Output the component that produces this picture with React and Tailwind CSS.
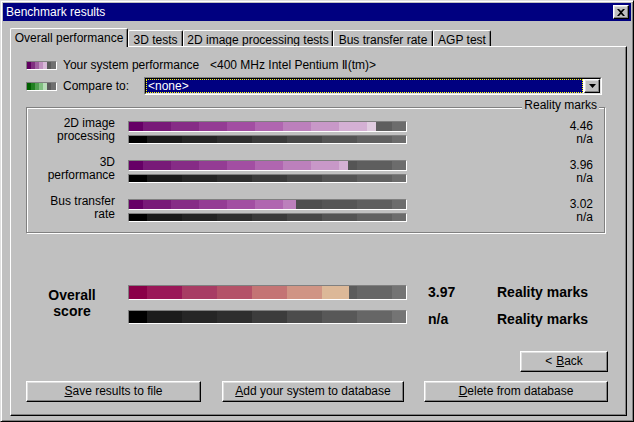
import React from 'react';

const FONT = "font-['Liberation_Sans','DejaVu_Sans','Noto_Sans_CJK_JP',sans-serif]";

const BAR_W = 277;
const PS = [0, 14, 42, 70, 98, 126, 154, 182, 210, 238, 266, 277];
const PURPLE = ['#660066', '#781a78', '#862c86', '#943c94', '#a24ea2', '#b066b0', '#bc80bc', '#c898c8', '#d4b0d4', '#e0cce0', '#f0e6f0'];
const GS = [0, 18, 53, 88, 123, 158, 193, 228, 263, 277];
const UNDER = ['#303030', '#383838', '#3c3c3c', '#424242', '#4a4a4a', '#4e4e4e', '#555555', '#5e5e5e', '#6c6c6c'];
const BLACK = ['#000000', '#1a1a1a', '#242424', '#2e2e2e', '#3a3a3a', '#474747', '#545454', '#606060', '#6c6c6c'];
const OVERALL = ['#8a0048', '#9a1858', '#a83c64', '#b45268', '#c47474', '#d09484', '#dcb898'];
const OVERALL_UNDER = ['#404040', '#484848', '#4c4c4c', '#525252', '#575757', '#5c5c5c', '#5c5c5c', '#666666', '#747474'];
const OVERALL_BLACK = ['#000000', '#1c1c1c', '#262626', '#2e2e2e', '#3c3c3c', '#4c4c4c', '#585858', '#666666', '#747474'];

function segs(stops, colors, from, to) {
  const out = [];
  for (let i = 0; i < colors.length; i++) {
    const a = Math.max(stops[i], from);
    const b = Math.min(stops[i + 1], to);
    if (b > a) out.push({ w: b - a, c: colors[i] });
  }
  return out;
}

function Bar({ fill, stops, colors, under, className }) {
  const parts = [...segs(stops, colors, 0, fill), ...segs(GS, under, fill, BAR_W)];
  return (
    <div className={`flex w-[279px] border border-t-[#808080] border-l-[#808080] border-b-white border-r-white ${className}`}>
      {parts.map((p, i) => (
        <div key={i} className="h-full" style={{ width: p.w, background: p.c }} />
      ))}
    </div>
  );
}

function Swatch({ colors }) {
  return (
    <div className="flex w-[31px] h-[9px] border border-t-[#808080] border-l-[#808080] border-b-white border-r-white">
      {colors.map((c, i) => (
        <div key={i} className="h-full w-[4px]" style={{ background: c }} />
      ))}
      <div className="h-full w-[4px] bg-[#5a5a5a]" />
      <div className="h-full flex-1 bg-[#707070]" />
    </div>
  );
}

const raised =
  'border border-t-white border-l-white border-b-black border-r-black shadow-[inset_-1px_-1px_0_#808080,inset_1px_1px_0_#dfdfdf]';

function Button({ className, children }) {
  return (
    <div className={`flex items-center justify-center h-[21px] text-[12px] leading-[13px] text-black bg-[#c0c0c0] ${raised} ${className}`}>
      {children}
    </div>
  );
}

function Metric({ l1, l2, fill, v }) {
  return (
    <div className="flex h-[39px]">
      <div className="w-[88px] text-right text-[12px] leading-[13px]">
        <div>{l1}</div>
        <div>{l2}</div>
      </div>
      <div className="ml-[13px] mt-[4px] flex flex-col">
        <Bar fill={fill} stops={PS} colors={PURPLE} under={UNDER} className="h-[11px]" />
        <Bar fill={BAR_W} stops={GS} colors={BLACK} under={UNDER} className="h-[9px] mt-[3px]" />
      </div>
      <div className="w-[186px] mt-[3px] text-right text-[12px] leading-[13px]">
        <div>{v}</div>
        <div>n/a</div>
      </div>
    </div>
  );
}

export default function App() {
  return (
    <div
      className={`${FONT} w-[634px] h-[422px] bg-[#c0c0c0] border border-t-[#dfdfdf] border-l-[#dfdfdf] border-b-black border-r-black shadow-[inset_1px_1px_0_#ffffff,inset_-1px_-1px_0_#808080] p-[2px] text-black flex flex-col`}
    >
      {/* Title bar */}
      <div className="h-[18px] bg-[#000080] flex items-center justify-between">
        <span className="pl-[3px] text-white text-[12px] leading-[13px]">Benchmark results</span>
        <div className={`mr-[2px] w-[16px] h-[14px] flex items-center justify-center bg-[#c0c0c0] ${raised}`}>
          <svg width="8" height="7" viewBox="0 0 8 7">
            <path d="M0 0h2l2 2 2-2h2L5 3.5 8 7H6L4 5 2 7H0l3-3.5z" fill="#000" />
          </svg>
        </div>
      </div>

      {/* Tabs */}
      <div className="ml-[7px] mt-[7px] h-[18px] flex items-end text-[12px] leading-[13px]">
        <div className="relative z-10 -mb-px h-[19px] w-[118px] bg-[#c0c0c0] border-t border-l border-white border-r border-r-black shadow-[inset_-1px_0_0_#808080] rounded-t-[2px] flex items-start justify-center pt-[3px]">
          Overall performance
        </div>
        <div className="h-[16px] w-[55px] border-t border-l border-white border-r border-r-black shadow-[inset_-1px_0_0_#808080] rounded-t-[2px] flex items-start justify-center pt-[3px]">
          3D tests
        </div>
        <div className="h-[16px] w-[150px] border-t border-l border-white border-r border-r-black shadow-[inset_-1px_0_0_#808080] rounded-t-[2px] flex items-start justify-center pt-[3px]">
          2D image processing tests
        </div>
        <div className="h-[16px] w-[100px] border-t border-l border-white border-r border-r-black shadow-[inset_-1px_0_0_#808080] rounded-t-[2px] flex items-start justify-center pt-[3px]">
          Bus transfer rate
        </div>
        <div className="h-[16px] w-[58px] border-t border-l border-white border-r border-r-black shadow-[inset_-1px_0_0_#808080] rounded-t-[2px] flex items-start justify-center pt-[3px]">
          AGP test
        </div>
      </div>

      {/* Panel */}
      <div className="ml-[7px] w-[617px] h-[370px] border border-t-white border-l-white border-r-black border-b-black shadow-[inset_-1px_-1px_0_#808080] pt-[12px] pl-[15px] flex flex-col text-[12px] leading-[13px]">
        {/* Legend 1 */}
        <div className="flex items-center h-[13px]">
          <Swatch colors={['#600060', '#803080', '#a060a0', '#c090c0', '#d8b8d8']} />
          <span className="ml-[6px] w-[147px]">Your system performance</span>
          <span>&lt;400 MHz Intel Pentium Ⅱ(tm)&gt;</span>
        </div>
        {/* Legend 2 */}
        <div className="flex items-center h-[18px] mt-[5px]">
          <Swatch colors={['#006000', '#208020', '#50a050', '#80c080', '#b8dcb8']} />
          <span className="ml-[6px] w-[81px]">Compare to:</span>
          <div className="w-[458px] h-[18px] border border-t-[#808080] border-l-[#808080] border-b-white border-r-white">
            <div className="h-full flex border border-t-black border-l-black border-b-[#dfdfdf] border-r-[#dfdfdf] bg-white">
              <div className="flex-1 bg-[#000080] border border-dotted border-[#ffff00] flex items-center pl-[1px] text-white">
                &lt;none&gt;
              </div>
              <div className={`ml-[1px] w-[16px] h-full flex items-center justify-center bg-[#c0c0c0] ${raised}`}>
                <svg width="7" height="4" viewBox="0 0 7 4">
                  <path d="M0 0h7L3.5 4z" fill="#000" />
                </svg>
              </div>
            </div>
          </div>
        </div>

        {/* Group box */}
        <div className="relative mt-[12px] w-[579px] h-[126px] border border-[#808080] shadow-[inset_1px_1px_0_#ffffff,1px_1px_0_#ffffff] pt-[9px]">
          <span className="absolute right-[5px] top-[-9px] px-[2px] bg-[#c0c0c0]">Reality marks</span>
          <Metric l1="2D image" l2="processing" fill={247} v="4.46" />
          <Metric l1="3D" l2="performance" fill={219} v="3.96" />
          <Metric l1="Bus transfer" l2="rate" fill={167} v="3.02" />
        </div>

        {/* Overall */}
        <div className="flex mt-[52px] font-bold text-[14px]">
          <div className="w-[92px] mt-[2px] text-center leading-[16px]">
            <div>Overall</div>
            <div>score</div>
          </div>
          <div className="ml-[10px] flex flex-col">
            <div className="flex items-start">
              <Bar fill={220} stops={GS} colors={OVERALL} under={OVERALL_UNDER} className="h-[15px]" />
              <span className="ml-[21px] w-[69px] leading-[14px]">3.97</span>
              <span className="leading-[14px]">Reality marks</span>
            </div>
            <div className="flex items-start mt-[10px]">
              <Bar fill={BAR_W} stops={GS} colors={OVERALL_BLACK} under={OVERALL_UNDER} className="h-[14px]" />
              <span className="ml-[21px] w-[69px] mt-[2px] leading-[14px]">n/a</span>
              <span className="mt-[2px] leading-[14px]">Reality marks</span>
            </div>
          </div>
        </div>

        {/* Back */}
        <div className="w-[582px] flex justify-end mt-[25px]">
          <Button className="w-[88px]">
            &lt; <span className="underline ml-[4px]">B</span>ack
          </Button>
        </div>

        {/* Bottom buttons */}
        <div className="w-[582px] flex mt-[9px]">
          <Button className="w-[175px]">
            <span className="underline">S</span>ave results to file
          </Button>
          <Button className="w-[182px] ml-[21px]">
            <span className="underline">A</span>dd your system to database
          </Button>
          <Button className="w-[184px] ml-[20px]">
            <span className="underline">D</span>elete from database
          </Button>
        </div>
      </div>
    </div>
  );
}
